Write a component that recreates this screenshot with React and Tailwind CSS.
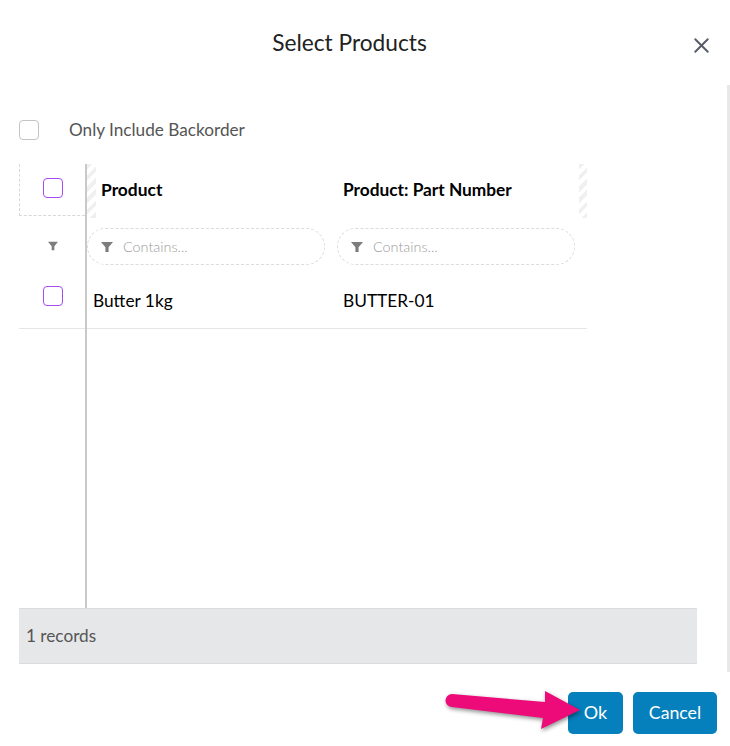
import {X} from "lucide-react";

const hatch = "bg-[repeating-linear-gradient(135deg,#f0f0f0_0px,#f0f0f0_4px,#ffffff_4px,#ffffff_8px)]";

function FunnelIcon({className}) {
    return (
        <svg viewBox="0 0 12 12" className={className} fill="#7d7d7d">
            <path d="M0 1h12L7.6 6.2V11H4.4V6.2z"/>
        </svg>
    );
}

function CheckBox({purple = false}) {
    return (
        <div className={`w-5 h-5 rounded-[4px] bg-white border ${purple ? "border-[#a44cf0]" : "border-[#c4c4c4]"}`}/>
    );
}

function FilterInput() {
    return (
        <div className="w-[238px] h-[37px] flex items-center pl-[13px] rounded-full border border-dashed border-[#dcdcdc]">
            <FunnelIcon className="w-3 h-3"/>
            <span className="ml-[10px] text-[14.4px] font-light text-[#9a9a9a]">Contains...</span>
        </div>
    );
}

export default function App() {
    return (
        <div className="relative w-[730px] h-[746px] bg-white overflow-hidden font-['Lato',sans-serif]">
            <div className="relative h-[85px] flex justify-center pt-[27px] pr-[31px]">
                <h1 className="text-[22.7px] leading-[32px] text-[#222]">Select Products</h1>
                <button className="absolute left-[689px] top-[33px] text-[#555b66]">
                    <X size={25} strokeWidth={1.8}/>
                </button>
            </div>

            {/* scrollbar */}
            <div className="absolute right-0 top-[85px] w-[3px] h-[587px] bg-[#e8e8e8]"/>

            <div className="pl-[19px] flex flex-col">
                <div className="flex items-center h-[22px] mt-[34px]">
                    <CheckBox/>
                    <span className="ml-[30px] text-[17.2px] text-[#555]">Only Include Backorder</span>
                </div>

                <div className="flex mt-[23px] h-[444px] w-[678px]">
                    <div className="w-[68px] shrink-0 border-r-2 border-[#c9c9c9] flex flex-col">
                        <div className="h-[52px] pl-[23px] pt-[14px] border-l border-b border-dashed border-[#d8d8d8]">
                            <CheckBox purple/>
                        </div>
                        <div className="h-[59px] flex items-center justify-center pl-[1px]">
                            <FunnelIcon className="w-[10px] h-[10px]"/>
                        </div>
                        <div className="h-[54px] pt-[11px] pl-[24px] border-b border-[#e6e6e6]">
                            <CheckBox purple/>
                        </div>
                    </div>

                    <div className="w-[500px] flex flex-col">
                        <div className="flex h-[54px]">
                            <div className={`w-[9px] ${hatch}`}/>
                            <div className="w-[247px] pl-[5px] pb-[1px] flex items-center text-[17.4px] font-bold text-black">Product</div>
                            <div className="w-[236px] pb-[2px] flex items-center text-[17.3px] font-bold text-black">Product: Part Number</div>
                            <div className={`w-[8px] ${hatch}`}/>
                        </div>
                        <div className="flex h-[57px] items-center gap-[12px]">
                            <FilterInput/>
                            <FilterInput/>
                        </div>
                        <div className="flex h-[54px] items-center pb-[2px] border-b border-[#e6e6e6] text-[17.3px] text-black">
                            <div className="w-[256px] pl-[6px]">Butter 1kg</div>
                            <div>BUTTER-01</div>
                        </div>
                    </div>
                </div>

                <div className="w-[678px] h-[56px] flex items-center pl-[7px] bg-[#e6e7e9] border-y border-[#dcdcdc] text-[17.2px] text-[#555]">
                    1 records
                </div>

                <div className="flex justify-end gap-[10px] w-[698px] mt-[28px]">
                    <button className="w-[55px] h-[42px] pb-[2px] rounded-[5px] bg-[#0580bd] text-white text-[18px]">Ok</button>
                    <button className="w-[84px] h-[42px] rounded-[5px] bg-[#0580bd] text-white text-[17.7px]">Cancel</button>
                </div>
            </div>

            {/* annotation arrow */}
            <svg className="absolute left-[440px] top-[684px] w-[150px] h-[50px] drop-shadow-[1px_2px_2px_rgba(0,0,0,0.45)]" viewBox="0 0 150 50">
                <path d="M12 10 L105 18 L105 7 L140 26 L101 45 L103 34 L12 23 A6.5 6.5 0 0 1 12 10 Z" fill="#ec0b78"/>
            </svg>
        </div>
    );
}
